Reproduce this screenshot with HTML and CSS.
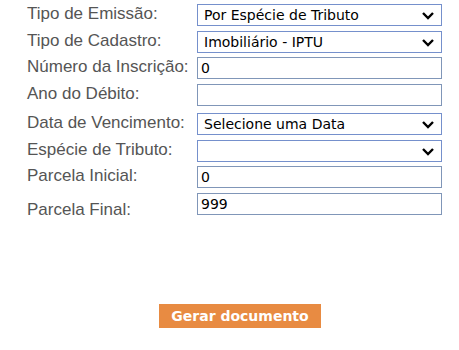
FILE: index.html
```html
<!DOCTYPE html>
<html lang="pt-BR">
<head>
    <meta charset="utf-8">
    <title>Emissão de Documento</title>
    <link rel="stylesheet" href="styles.css">
</head>
<body>

<form class="emissao">
    <div class="row">
        <label for="tipoEmissao">Tipo de Emissão:</label>
        <div class="select">
            <span>Por Espécie de Tributo</span>
            <svg viewBox="0 0 14 10"><path d="M2 3 L7 8 L12 3"/></svg>
        </div>
    </div>
    <div class="row">
        <label for="tipoCadastro">Tipo de Cadastro:</label>
        <div class="select">
            <span>Imobiliário - IPTU</span>
            <svg viewBox="0 0 14 10"><path d="M2 3 L7 8 L12 3"/></svg>
        </div>
    </div>
    <div class="row">
        <label for="inscricao">Número da Inscrição:</label>
        <input class="field" id="inscricao" type="text" value="0">
    </div>
    <div class="row">
        <label for="ano">Ano do Débito:</label>
        <input class="field" id="ano" type="text" value="">
    </div>
    <div class="row spaced">
        <label for="vencimento">Data de Vencimento:</label>
        <div class="select">
            <span>Selecione uma Data</span>
            <svg viewBox="0 0 14 10"><path d="M2 3 L7 8 L12 3"/></svg>
        </div>
    </div>
    <div class="row">
        <label for="especie">Espécie de Tributo:</label>
        <div class="select">
            <span></span>
            <svg viewBox="0 0 14 10"><path d="M2 3 L7 8 L12 3"/></svg>
        </div>
    </div>
    <div class="row">
        <label for="parcelaIni">Parcela Inicial:</label>
        <input class="field" id="parcelaIni" type="text" value="0">
    </div>
    <div class="row">
        <label for="parcelaFim" class="low">Parcela Final:</label>
        <input class="field" id="parcelaFim" type="text" value="999">
    </div>

    <div class="actions">
        <button type="button" class="gerar">Gerar documento</button>
    </div>
</form>

</body>
</html>
```

FILE: styles.css
```css
body {
    margin: 0;
    background: #fff;
    font-family: "Liberation Sans", Arial, sans-serif;
}
.emissao {
    display: flex;
    flex-direction: column;
    gap: 4.5px;
    padding: 4px 0 0 27px;
}
.row {
    display: flex;
    align-items: flex-start;
}
.row.spaced {
    margin-top: 3px;
}
.row label {
    width: 170px;
    font-size: 17px;
    line-height: 20px;
    color: #555;
    white-space: nowrap;
}
.row label.low {
    padding-top: 7px;
}
.select, .field {
    box-sizing: border-box;
    width: 245px;
    height: 22px;
    margin: 0;
    border: 1px solid #7590cc;
    background: #fff;
    font-family: "DejaVu Sans", Verdana, sans-serif;
    font-size: 14px;
    color: #000;
}
.select {
    display: flex;
    align-items: center;
    justify-content: space-between;
    padding: 0 6px 0 6px;
}
.select svg {
    width: 14px;
    height: 10px;
}
.select path {
    fill: none;
    stroke: #000;
    stroke-width: 2.4;
}
.field {
    padding: 0 3px;
    border-color: #8096b8;
    outline: none;
}
.actions {
    padding: 80px 0 0 132px;
}
.gerar {
    width: 162px;
    height: 24px;
    border: none;
    background: #e88b42;
    color: #fff;
    font-family: "DejaVu Sans", Verdana, sans-serif;
    font-weight: bold;
    font-size: 14px;
    padding: 0;
}
```
